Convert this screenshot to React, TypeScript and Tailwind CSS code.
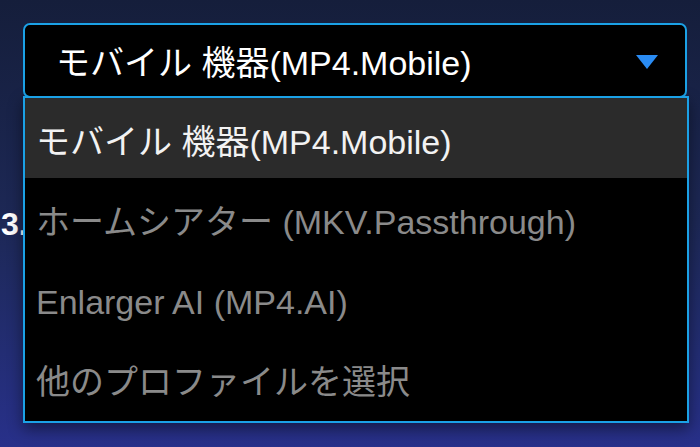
import { useState } from "react";

const options = [
  "モバイル 機器(MP4.Mobile)",
  "ホームシアター (MKV.Passthrough)",
  "Enlarger AI (MP4.AI)",
  "他のプロファイルを選択",
];

const font = {
  fontFamily: '"Liberation Sans", "Noto Sans CJK JP", sans-serif',
};

const App = () => {
  const [selected] = useState(0);
  return (
    <div
      className="relative w-full h-[447px] overflow-hidden bg-gradient-to-b from-[#151e3b] via-[#1d2856] to-[#28308a]"
      style={font}
    >
      <div className="pt-[23px] pl-[23px]">
        {/* select box */}
        <div className="w-[664px] h-[75px] flex items-center justify-between bg-black border-2 border-[#1ba1e6] rounded-[7px] pl-[31px] pr-[27px]">
          <span className="text-[34px] text-white leading-none pt-[5px]">{options[selected]}</span>
          <svg width="22" height="14" viewBox="0 0 22 14" className="mt-[2px]">
            <polygon points="0,0 22,0 11,14" fill="#2a8cf4" />
          </svg>
        </div>
        {/* underlying list, partly covered by the menu */}
        <div className="mt-[110px] -ml-[22px] text-[32px] font-bold text-white leading-none">3.</div>
      </div>

      {/* open menu */}
      <div className="absolute top-[96px] left-[23px] w-[666px] h-[327px] bg-black border-2 border-[#1ba1e6] shadow-[0_6px_14px_rgba(0,0,0,0.45)] flex flex-col">
        {options.map((o, i) => (
          <div
            key={o}
            className={
              i === selected
                ? "h-[80px] flex items-center pl-[11px] pt-[8px] bg-[#2b2b2b] text-[34px] text-[#f2f2f2] leading-none"
                : "h-[80px] flex items-center pl-[11px] pt-[8px] text-[34px] text-[#8a8a8a] leading-none"
            }
          >
            {o}
          </div>
        ))}
      </div>
    </div>
  );
};

export default App;
